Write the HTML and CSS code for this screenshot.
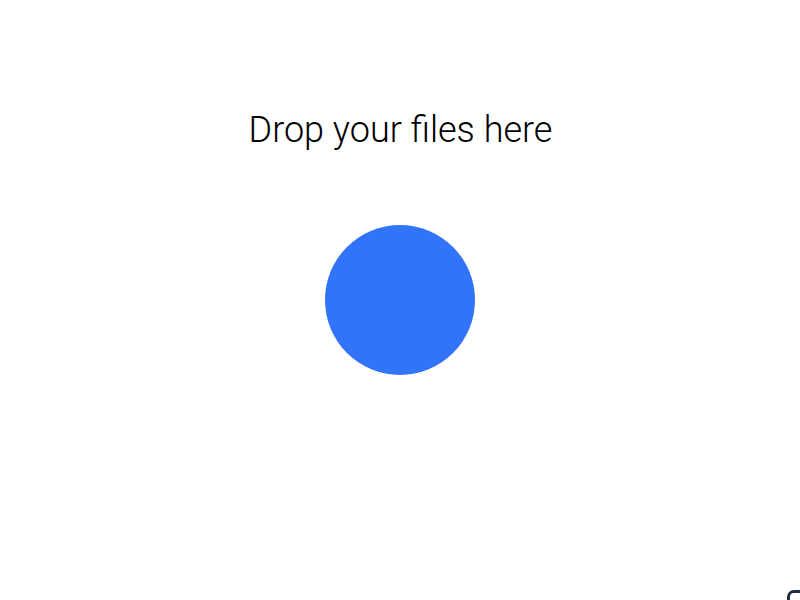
FILE: index.html
```html
<!DOCTYPE html>
<html>
<head>
<meta charset="utf-8">
<link rel="stylesheet" href="styles.css">
</head>
<body>
<main class="drop">
  <h1 class="title">Drop your files here</h1>
  <div class="ball"></div>
</main>
<div class="corner"></div>
</body>
</html>
```
FILE: styles.css
```css
html, body {
  margin: 0;
  padding: 0;
  background: #ffffff;
  width: 800px;
  height: 600px;
  overflow: hidden;
}
.drop {
  display: flex;
  flex-direction: column;
  align-items: center;
  padding-top: 106px;
}
.title {
  margin: 0;
  font-family: Roboto, "Liberation Sans", sans-serif;
  font-weight: 300;
  font-size: 36px;
  line-height: 48px;
  color: #000000;
  padding-left: 1px;
}
.ball {
  margin-top: 71px;
  width: 150px;
  height: 150px;
  border-radius: 50%;
  background: #3174f9;
}
.corner {
  position: absolute;
  left: 787px;
  top: 590px;
  width: 30px;
  height: 30px;
  border: 3px solid #1f2a44;
  border-radius: 7px;
  box-sizing: border-box;
}
```
